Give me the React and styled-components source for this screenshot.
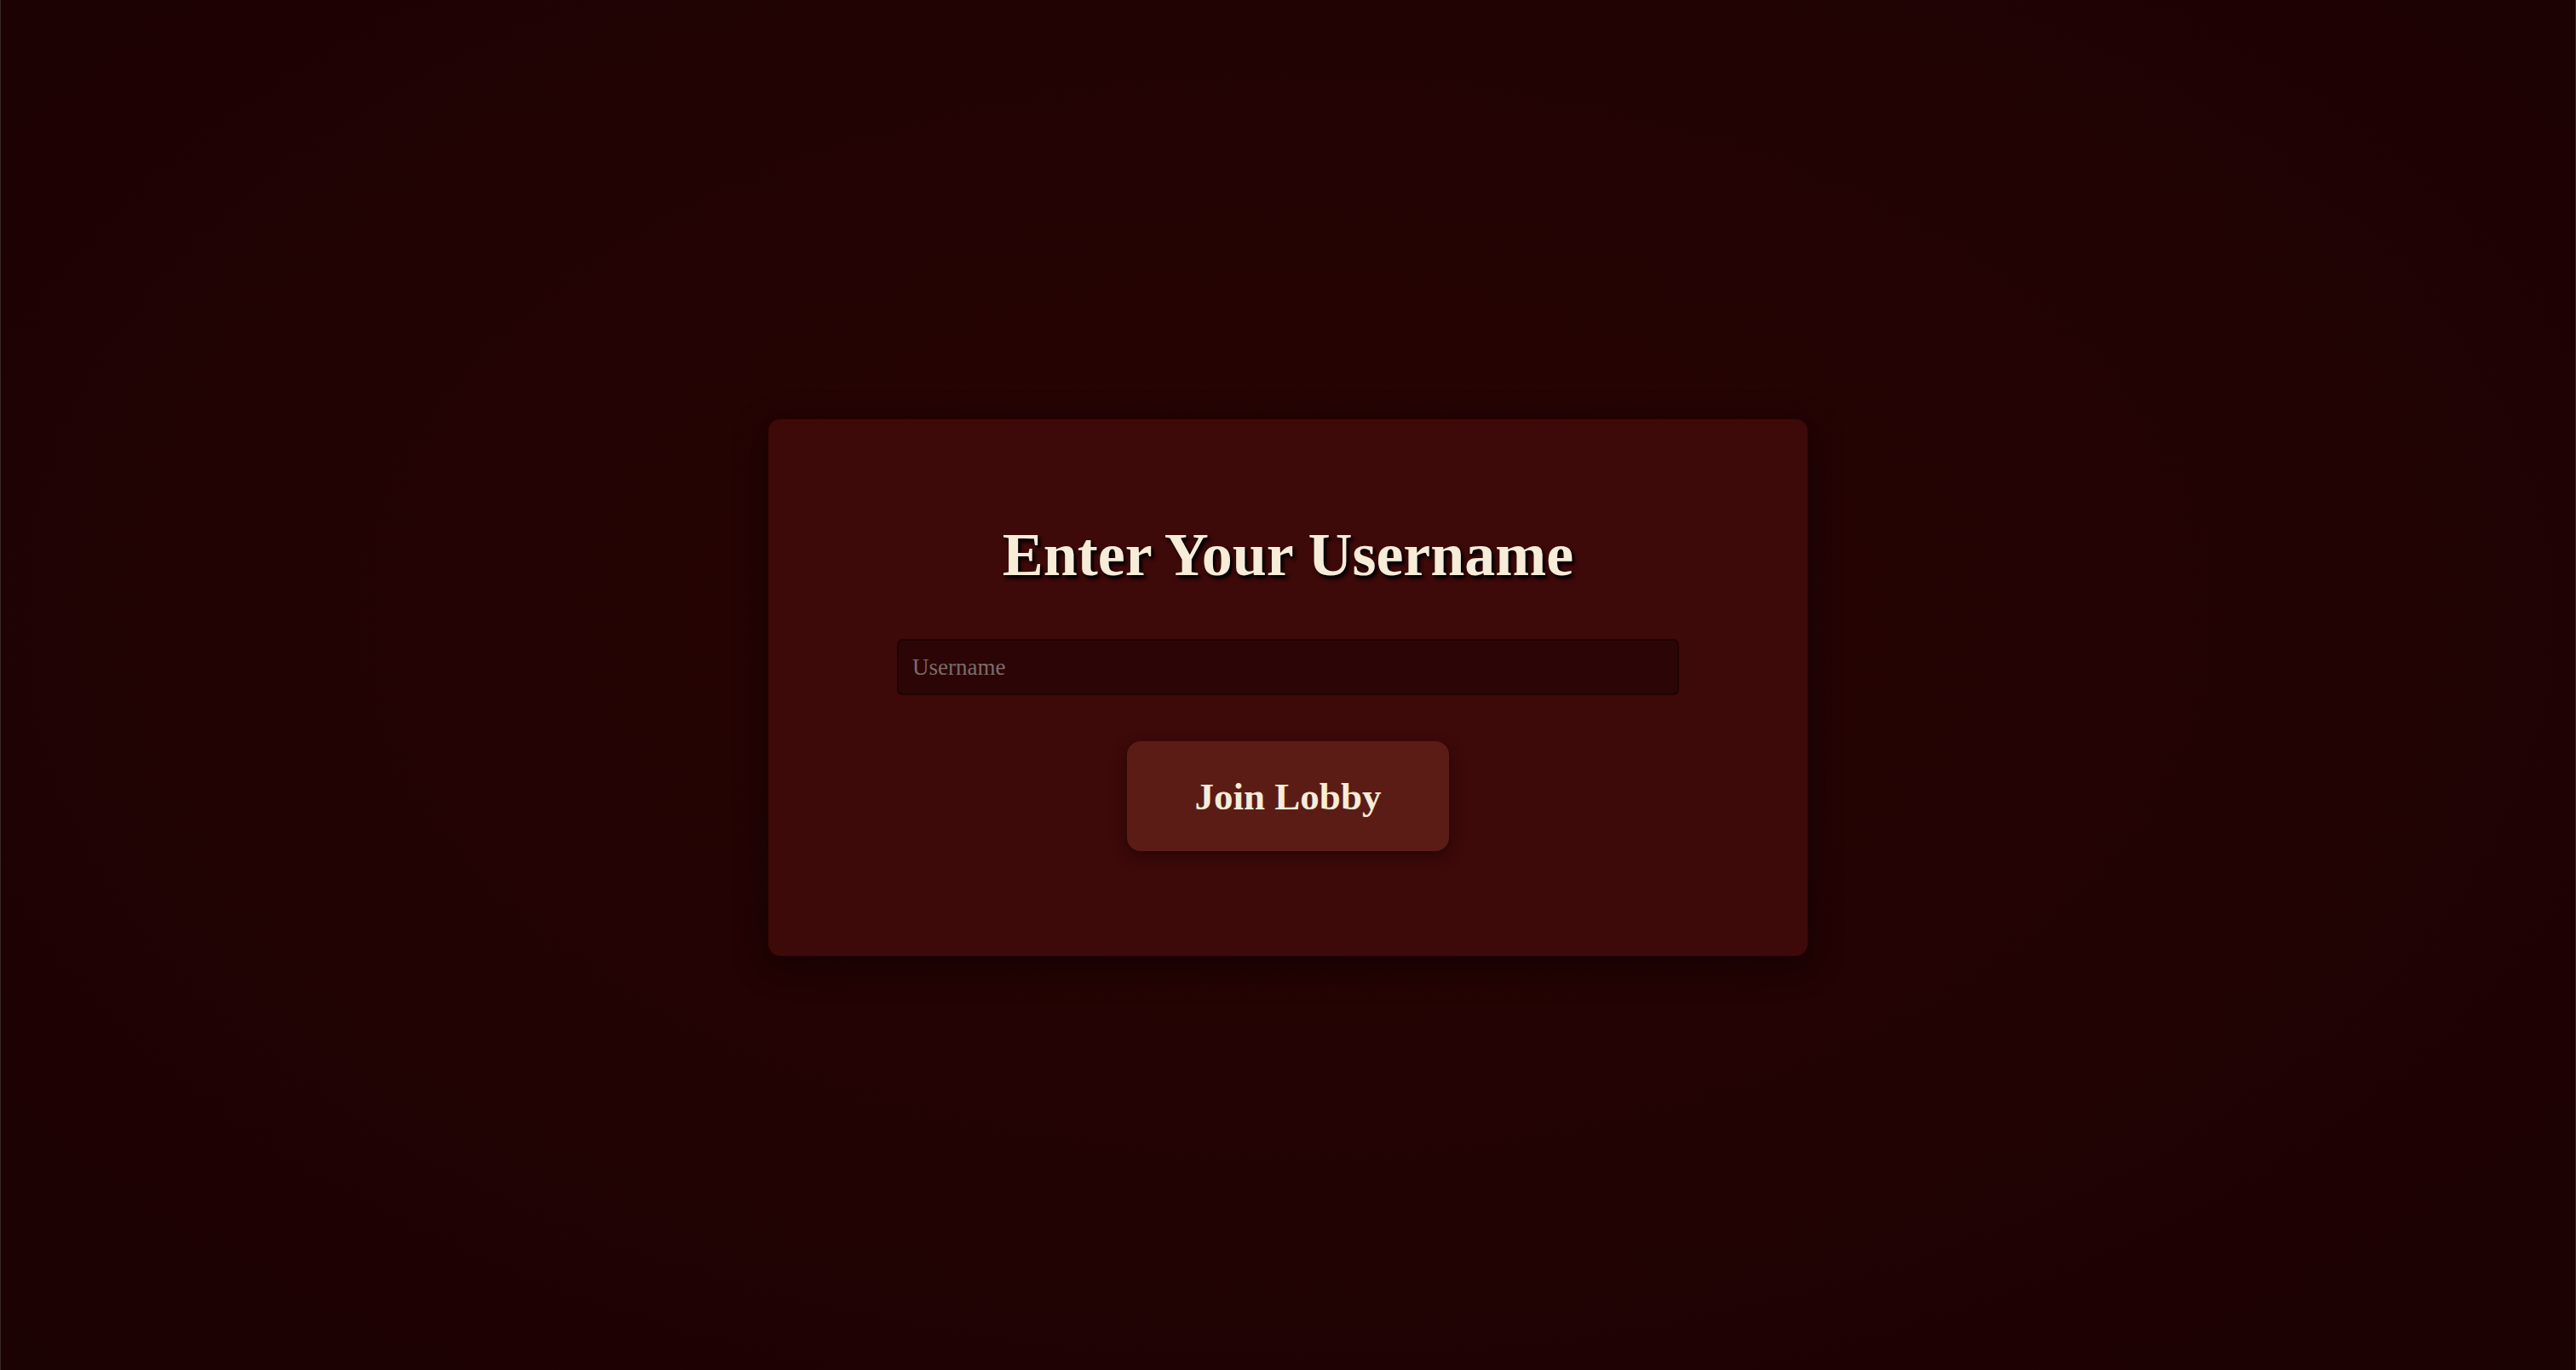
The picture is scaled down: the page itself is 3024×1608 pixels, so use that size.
import React, { useState } from "react";
import styled, { createGlobalStyle } from "styled-components";

const GlobalStyle = createGlobalStyle`
  html, body {
    margin: 0;
    padding: 0;
    height: 100%;
  }
  body {
    background: #1c0203;
    font-family: "Liberation Serif", "Times New Roman", serif;
  }
  #root {
    min-height: 100%;
  }
`;

const Page = styled.main`
  min-height: 100vh;
  box-sizing: border-box;
  display: flex;
  align-items: center;
  justify-content: center;
  padding-top: 6px;
  border-left: 1px solid #3a2828;
  border-right: 1px solid #3a2828;
  background: radial-gradient(ellipse at 50% 45%, #280404 0%, #230303 45%, #1b0203 100%);
`;

const Card = styled.section`
  width: 1220px;
  box-sizing: border-box;
  padding: 118px 0 123px;
  display: flex;
  flex-direction: column;
  align-items: center;
  background: #3d0909;
  border-radius: 14px;
  box-shadow: 0 10px 40px rgba(0, 0, 0, 0.45);
`;

const Title = styled.h1`
  margin: 0 0 57px;
  font-family: "Liberation Serif", "Times New Roman", serif;
  font-weight: 700;
  font-size: 72px;
  line-height: 83px;
  color: #f6ecd8;
  text-shadow: 3px 4px 4px rgba(0, 0, 0, 0.95), 2px 2px 2px rgba(0, 0, 0, 0.6);
`;

const Input = styled.input`
  width: 918px;
  height: 66px;
  box-sizing: border-box;
  padding: 0 16px;
  margin: 0 0 54px;
  border: 2px solid #1f0303;
  border-radius: 7px;
  background: #2c0606;
  color: #f6ecd8;
  font-family: "Liberation Serif", "Times New Roman", serif;
  font-size: 27px;
  outline: none;

  &::placeholder {
    color: #7c6c6a;
  }
`;

const Button = styled.button`
  width: 378px;
  height: 129px;
  border: none;
  border-radius: 16px;
  background: #5c1c16;
  color: #f6ecd8;
  font-family: "Liberation Serif", "Times New Roman", serif;
  font-weight: 700;
  font-size: 45px;
  cursor: pointer;
  box-shadow: 0 6px 18px rgba(0, 0, 0, 0.35);
`;

export default function App() {
  const [name, setName] = useState("");
  return (
    <>
      <GlobalStyle />
      <Page>
        <Card>
          <Title>Enter Your Username</Title>
          <Input
            type="text"
            placeholder="Username"
            value={name}
            onChange={(e) => setName(e.target.value)}
          />
          <Button type="button">Join Lobby</Button>
        </Card>
      </Page>
    </>
  );
}
